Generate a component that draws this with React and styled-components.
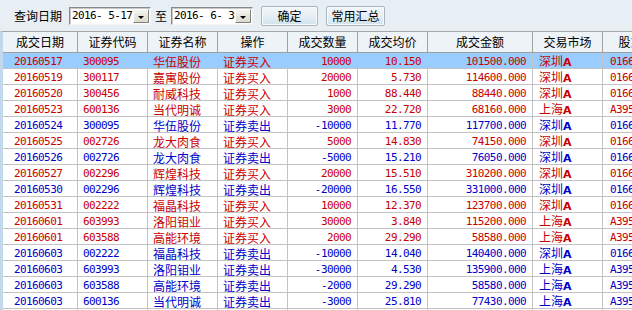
import styled, { createGlobalStyle } from "styled-components";

const GlobalStyle = createGlobalStyle`
  html, body { margin: 0; padding: 0; background: #e7eef4; }
`

const Window = styled.div`
  width: 632px;
  height: 310px;
  overflow: hidden;
  background: #e7eef4;
  font-family: "Noto Sans CJK SC", "Liberation Sans", sans-serif;
  font-size: 12px;
  color: #000;
`

const TopBar = styled.div`
  height: 31px;
  display: flex;
  align-items: center;
  padding-left: 14px;
  box-sizing: border-box;
`

const Label = styled.span`
  line-height: 16px;
  margin-right: ${props => props.$mr || 0}px;
  margin-left: ${props => props.$ml || 0}px;
`

const DateBox = styled.div`
  width: 82px;
  height: 18px;
  box-sizing: border-box;
  display: flex;
  align-items: center;
  background: #fff;
  border: 1px solid;
  border-color: #8a8a8a #f4f4f4 #f4f4f4 #8a8a8a;
  box-shadow: inset 1px 1px 0 #c8c8c8;
  padding-left: 2px;
  margin-top: 1px;
`

const DateText = styled.span`
  flex: 1;
  font-family: "DejaVu Sans Mono", monospace;
  font-size: 11px;
  letter-spacing: -0.6px;
  white-space: pre;
  line-height: 14px;
`

const DropBtn = styled.div`
  width: 16px;
  height: 14px;
  margin-right: 1px;
  box-sizing: border-box;
  background: linear-gradient(#f6f5ee, #dcd9cc);
  border: 1px solid;
  border-color: #fff #808080 #808080 #fff;
  display: flex;
  align-items: center;
  justify-content: center;
  &::after {
    content: "";
    border-left: 3px solid transparent;
    border-right: 3px solid transparent;
    border-top: 3px solid #000;
    margin-top: 2px;
  }
`

const Button = styled.div`
  width: ${props => props.$w}px;
  height: 20px;
  box-sizing: border-box;
  margin-left: ${props => props.$ml}px;
  border: 1px solid #a9b4bd;
  border-radius: 2px;
  background: linear-gradient(#f4f8fb 0%, #e6eef4 50%, #cfe3ee 100%);
  box-shadow: inset 0 0 0 1px #f8fbfd;
  display: flex;
  align-items: center;
  justify-content: center;
  line-height: 16px;
`

const Table = styled.div`
  border-left: 3px solid #c4d8ec;
  border-top: 1px solid #a7a7a7;
`

const cols = "75px 70px 70px 70px 70px 70px 105px 70px 80px"

const HeadRow = styled.div`
  display: grid;
  grid-template-columns: ${cols};
  height: 21px;
  box-sizing: border-box;
  background: #eef3f7;
  border-bottom: 1px solid #a0a0a0;
`

const HeadCell = styled.div`
  display: flex;
  align-items: center;
  justify-content: center;
  border-right: 1px solid #a0a0a0;
  line-height: 16px;
  white-space: nowrap;
`

const Row = styled.div`
  display: grid;
  grid-template-columns: ${cols};
  height: 16px;
  box-sizing: border-box;
  border-bottom: 1px solid #c3c3c3;
  background: ${props => (props.$selected ? "#99ccff" : "#fff")};
  color: ${props => (props.$sell ? "#0000c8" : "#c80000")};
`

const Cell = styled.div`
  display: flex;
  align-items: center;
  justify-content: ${props => (props.$right ? "flex-end" : "flex-start")};
  padding: ${props => (props.$right ? "0 6px 0 0" : `0 0 0 ${props.$pl || 5}px`)};
  border-right: 1px solid #c3c3c3;
  white-space: pre;
  line-height: 15px;
  font-family: ${props => (props.$num ? `"DejaVu Sans Mono", monospace` : `"Noto Sans CJK SC", sans-serif`)};
  font-size: ${props => (props.$num ? "11px" : "12px")};
  letter-spacing: ${props => (props.$num ? "-0.6px" : "0")};
`

const Market = styled.span`
  & b {
    font-family: "DejaVu Sans", sans-serif;
    font-size: 11px;
    font-weight: bold;
  }
`

const headers = ["成交日期", "证券代码", "证券名称", "操作", "成交数量", "成交均价", "成交金额", "交易市场", "股东代码"]

const trades = [
  ["20160517", "300095", "华伍股份", 0, "10000", "10.150", "101500.000", "深圳"],
  ["20160519", "300117", "嘉寓股份", 0, "20000", "5.730", "114600.000", "深圳"],
  ["20160520", "300456", "耐威科技", 0, "1000", "88.440", "88440.000", "深圳"],
  ["20160523", "600136", "当代明诚", 0, "3000", "22.720", "68160.000", "上海"],
  ["20160524", "300095", "华伍股份", 1, "-10000", "11.770", "117700.000", "深圳"],
  ["20160525", "002726", "龙大肉食", 0, "5000", "14.830", "74150.000", "深圳"],
  ["20160526", "002726", "龙大肉食", 1, "-5000", "15.210", "76050.000", "深圳"],
  ["20160527", "002296", "辉煌科技", 0, "20000", "15.510", "310200.000", "深圳"],
  ["20160530", "002296", "辉煌科技", 1, "-20000", "16.550", "331000.000", "深圳"],
  ["20160531", "002222", "福晶科技", 0, "10000", "12.370", "123700.000", "深圳"],
  ["20160601", "603993", "洛阳钼业", 0, "30000", "3.840", "115200.000", "上海"],
  ["20160601", "603588", "高能环境", 0, "2000", "29.290", "58580.000", "上海"],
  ["20160603", "002222", "福晶科技", 1, "-10000", "14.040", "140400.000", "深圳"],
  ["20160603", "603993", "洛阳钼业", 1, "-30000", "4.530", "135900.000", "上海"],
  ["20160603", "603588", "高能环境", 1, "-2000", "29.290", "58580.000", "上海"],
  ["20160603", "600136", "当代明诚", 1, "-3000", "25.810", "77430.000", "上海"],
]

const App = () => {
  return (
    <Window>
      <GlobalStyle />
      <TopBar>
        <Label $mr={7}>查询日期</Label>
        <DateBox>
          <DateText>2016- 5-17</DateText>
          <DropBtn />
        </DateBox>
        <Label $ml={4} $mr={4}>至</Label>
        <DateBox>
          <DateText>2016- 6- 3</DateText>
          <DropBtn />
        </DateBox>
        <Button $w={57} $ml={8}>确定</Button>
        <Button $w={59} $ml={8}>常用汇总</Button>
      </TopBar>
      <Table>
        <HeadRow>
          {headers.map(h => (
            <HeadCell key={h}>{h}</HeadCell>
          ))}
        </HeadRow>
        {trades.map((t, i) => (
          <Row key={i} $selected={i === 0} $sell={t[3] === 1}>
            <Cell $num $pl={11}>{t[0]}</Cell>
            <Cell $num>{t[1]}</Cell>
            <Cell>{t[2]}</Cell>
            <Cell>{t[3] ? "证券卖出" : "证券买入"}</Cell>
            <Cell $num $right>{t[4]}</Cell>
            <Cell $num $right>{t[5]}</Cell>
            <Cell $num $right>{t[6]}</Cell>
            <Cell $pl={6}>
              <Market>{t[7]}<b>A</b></Market>
            </Cell>
            <Cell $num $pl={7}>{t[7] === "深圳" ? "0166358820" : "A395108862"}</Cell>
          </Row>
        ))}
        <Row $sell>
          {headers.map(h => (
            <Cell key={h} />
          ))}
        </Row>
      </Table>
    </Window>
  )
}

export default App
